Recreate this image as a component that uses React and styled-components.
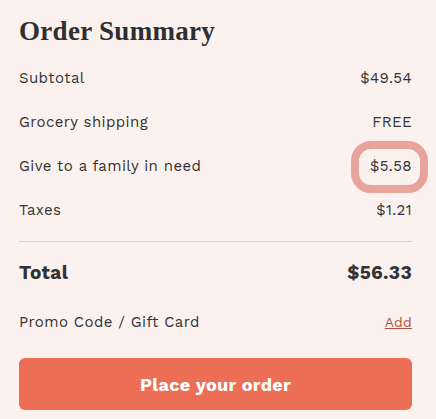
import React from "react";
import styled, { createGlobalStyle } from "styled-components";

const Global = createGlobalStyle`
  html, body {
    margin: 0;
    padding: 0;
    background: #fbf2ef;
  }
`;

const S = {
  Wrapper: styled.div`
    width: 436px;
    height: 419px;
    box-sizing: border-box;
    padding: 12px 24px 0 19px;
    font-family: "Work Sans", "Open Sans", "Liberation Sans", sans-serif;
    color: #333;
    overflow: hidden;
  `,
  Title: styled.h2`
    margin: 0 0 6px 0;
    font-family: "Liberation Serif", serif;
    font-weight: bold;
    font-size: 27px;
    line-height: 38px;
    color: #2f2f2f;
    letter-spacing: 0.3px;
  `,
  Row: styled.div`
    display: flex;
    justify-content: space-between;
    align-items: center;
    height: 44px;
    font-size: 15px;
    letter-spacing: 0.4px;
  `,
  Value: styled.span`
    position: relative;
    display: inline-block;
    line-height: 20px;
  `,
  Ring: styled.span`
    position: absolute;
    left: -19px;
    right: -16px;
    top: -15px;
    bottom: -17px;
    border: 8px solid #e8a39a;
    border-radius: 20px;
  `,
  Divider: styled.hr`
    margin: 9px 0 0 0;
    border: none;
    border-top: 1px solid #d8d3d1;
  `,
  TotalRow: styled.div`
    display: flex;
    justify-content: space-between;
    align-items: center;
    height: 60px;
    font-size: 19px;
    font-weight: bold;
    letter-spacing: 0.3px;
  `,
  PromoRow: styled.div`
    display: flex;
    justify-content: space-between;
    align-items: center;
    height: 40px;
    font-size: 15px;
    letter-spacing: 0.4px;
  `,
  Link: styled.a`
    font-size: 14px;
    letter-spacing: 0.2px;
    color: #b24f3d;
    text-decoration: underline;
    cursor: pointer;
  `,
  Button: styled.button`
    display: block;
    width: 100%;
    height: 52px;
    margin-top: 16px;
    border: none;
    border-radius: 6px;
    background: #ec6e55;
    color: #fff;
    font-family: inherit;
    font-size: 18px;
    letter-spacing: 0.3px;
    font-weight: bold;
    cursor: pointer;
  `,
};

const rows = [
  ["Subtotal", "$49.54"],
  ["Grocery shipping", "FREE"],
  ["Give to a family in need", "$5.58", true],
  ["Taxes", "$1.21"],
];

const App = () => {
  return (
    <S.Wrapper>
      <Global />
      <S.Title>Order Summary</S.Title>
      {rows.map(([label, value, ring]) => (
        <S.Row key={label}>
          <span>{label}</span>
          <S.Value>
            {value}
            {ring && <S.Ring />}
          </S.Value>
        </S.Row>
      ))}
      <S.Divider />
      <S.TotalRow>
        <span>Total</span>
        <span>$56.33</span>
      </S.TotalRow>
      <S.PromoRow>
        <span>Promo Code / Gift Card</span>
        <S.Link>Add</S.Link>
      </S.PromoRow>
      <S.Button>Place your order</S.Button>
    </S.Wrapper>
  );
};

export default App;
